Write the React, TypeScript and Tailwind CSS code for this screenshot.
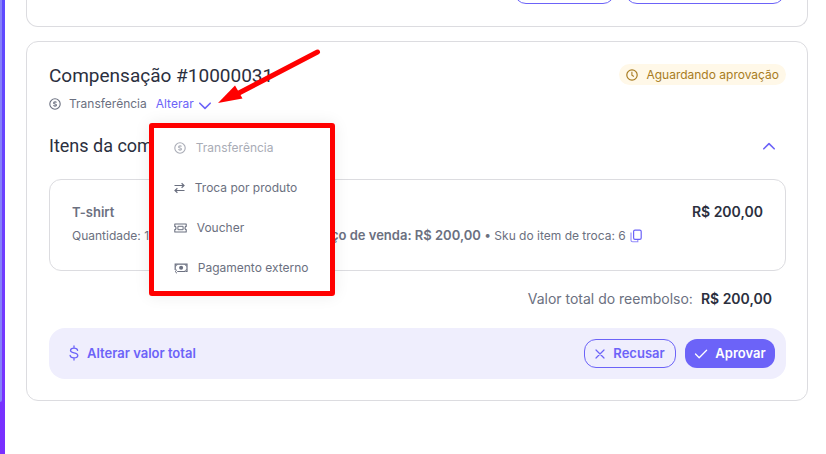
import React, { ReactNode } from 'react';

interface IconProps {
  className?: string;
}

function CoinIcon({ className }: IconProps) {
  return (
    <svg className={className} viewBox="0 0 12 12" fill="none" stroke="currentColor" aria-hidden="true">
      <circle cx="6" cy="6" r="5.2" strokeWidth="1.1" />
      <path d="M7.5 4.5C7.3 4.1 6.8 3.9 6 3.9c-.9 0-1.4.4-1.4 1 0 1.4 2.9.7 2.9 2.2 0 .7-.6 1-1.5 1-.8 0-1.3-.3-1.5-.8" strokeWidth="1.1" />
    </svg>
  );
}

function SwapIcon({ className }: IconProps) {
  return (
    <svg className={className} viewBox="0 0 11 12" fill="none" stroke="currentColor" aria-hidden="true">
      <path d="M.5 3.5H10M7.6 1.2 10 3.5 7.6 5.8M10.5 8.5H1M3.4 6.2 1 8.5l2.4 2.3" strokeWidth="1.2" />
    </svg>
  );
}

function VoucherIcon({ className }: IconProps) {
  return (
    <svg className={className} viewBox="0 0 13 10" fill="none" stroke="currentColor" aria-hidden="true">
      <path d="M.8 1h11.4v2.4c-.9 0-1.200.7-1.200 1.600s.3 1.600 1.200 1.600V9H.8V6.600C1.700 6.600 2 5.900 2 5s-.3-1.600-1.200-1.600z" strokeWidth="1.1" strokeLinejoin="round" />
      <path d="M3.9 3.300h5.200v3.400H3.900z" strokeWidth="1" />
    </svg>
  );
}

function CashIcon({ className }: IconProps) {
  return (
    <svg className={className} viewBox="0 0 14 12" fill="none" stroke="currentColor" aria-hidden="true">
      <path d="M3.8 2.1H13v7.4h-1.6M11 9.5H3.2M1.2 8V2.1h2.6" strokeWidth="1.2" />
      <path d="M11 2.1c0 1.2.8 1.9 2 1.9M13 7.6c-1.2 0-2 .8-2 1.9M1.2 4.2c1 0 1.900-.8 1.900-1.900" strokeWidth="0.9" />
      <circle cx="7.1" cy="5.8" r="2" fill="currentColor" stroke="none" />
      <path d="M3 7.7 1.1 9.5 3 11.3" strokeWidth="1" />
    </svg>
  );
}

function ChevronIcon({ className }: IconProps) {
  return (
    <svg className={className} viewBox="0 0 14 8" fill="none" stroke="currentColor" strokeLinecap="round" strokeLinejoin="round" aria-hidden="true">
      <path d="M1.8 1.2 7 6.4l5.2-5.2" strokeWidth="1.6" />
    </svg>
  );
}

function ClockIcon({ className }: IconProps) {
  return (
    <svg className={className} viewBox="0 0 12 12" fill="none" stroke="currentColor" aria-hidden="true">
      <circle cx="6" cy="6" r="5.2" strokeWidth="1.2" />
      <path d="M5.9 2.8v3.4l2 1.3" strokeWidth="1.1" />
    </svg>
  );
}

function CopyIcon({ className }: IconProps) {
  return (
    <svg className={className} viewBox="0 0 12 14" fill="none" stroke="currentColor" aria-hidden="true">
      <rect x="3.6" y="1.2" width="7.6" height="9.2" rx="1.4" strokeWidth="1.2" />
      <path d="M1 3.6v7.6a1.6 1.6 0 0 0 1.6 1.6h5.2v-2" strokeWidth="1.1" opacity="0.75" />
    </svg>
  );
}

function DollarIcon({ className }: IconProps) {
  return (
    <svg className={className} viewBox="0 0 10 16" fill="none" stroke="currentColor" strokeLinecap="round" aria-hidden="true">
      <path d="M5 1v2M5 13v2M8.6 5.4C8.4 3.9 7 3.2 5 3.2c-2.2 0-3.5.9-3.5 2.3 0 3.4 7.3 1.4 7.3 5 0 1.5-1.5 2.4-3.8 2.4-2.2 0-3.7-.9-3.9-2.5" strokeWidth="1.3" />
    </svg>
  );
}

function CloseIcon({ className }: IconProps) {
  return (
    <svg className={className} viewBox="0 0 10 10" fill="none" stroke="currentColor" strokeLinecap="round" aria-hidden="true">
      <path d="m1 1 8 8M9 1 1 9" strokeWidth="1.2" />
    </svg>
  );
}

function CheckIcon({ className }: IconProps) {
  return (
    <svg className={className} viewBox="0 0 14 10" fill="none" stroke="currentColor" strokeLinecap="round" strokeLinejoin="round" aria-hidden="true">
      <path d="M1.5 5 5.2 8.7 12.6 1.3" strokeWidth="1.3" />
    </svg>
  );
}

interface MenuItemProps {
  icon: ReactNode;
  label: string;
  disabled?: boolean;
}

function MenuItem({ icon, label, disabled }: MenuItemProps) {
  return (
    <li>
      <button
        type="button"
        role="menuitem"
        disabled={disabled}
        className="flex h-10 w-full items-center gap-2.5 pl-5 text-left text-xs disabled:text-[#a9acb6]"
      >
        {icon}
        {label}
      </button>
    </li>
  );
}

function MethodMenu() {
  return (
    <div className="absolute -left-[7px] top-[9px] z-10 w-[186px] rounded-[3px] border-[5px] border-[#ff0000] shadow-[0_0_16px_rgba(0,0,0,0.08)]">
      <ul role="menu" className="bg-white pb-[3px]">
        <MenuItem icon={<CoinIcon className="h-3 w-3" />} label="Transferência" disabled />
        <MenuItem icon={<SwapIcon className="h-3 w-[11px]" />} label="Troca por produto" />
        <MenuItem icon={<VoucherIcon className="h-2.5 w-[13px]" />} label="Voucher" />
        <MenuItem icon={<CashIcon className="h-3 w-3.5" />} label="Pagamento externo" />
      </ul>
    </div>
  );
}

function PointerArrow() {
  return (
    <svg className="pointer-events-none absolute left-[61px] -top-[66px] z-20 h-[56px] w-[104px]" viewBox="0 0 104 56" aria-hidden="true">
      <path d="M100.5 4 20 46" stroke="#ff0000" strokeWidth="5" strokeLinecap="round" />
      <path d="M1 55 18 37.5 25.5 50.5z" fill="#ff0000" />
    </svg>
  );
}

export default function App() {
  return (
    <div className="flex min-h-screen bg-white font-['Inter','Liberation_Sans',sans-serif] text-xs text-[#6b7080]">
      <aside className="flex w-[5px] shrink-0 bg-gradient-to-b from-[#5d4bff] to-[#7a2eff]">
        <div className="mb-[52px] w-0.5 rounded-br-sm bg-[#8580fa]" />
      </aside>

      <main className="flex min-w-0 grow flex-col gap-3.5 pl-[21px] pr-[18px]">
        <section className="flex justify-end gap-2.5 rounded-b-xl border border-t-0 border-[#dcdce0] px-[22px] pb-[22px]">
          <div className="h-1 w-[101px] overflow-hidden">
            <div className="-mt-6 h-7 rounded-xl border border-[#6c63f8]" />
          </div>
          <div className="h-1 w-[160px] overflow-hidden">
            <div className="-mt-6 h-7 rounded-xl border border-[#6c63f8]" />
          </div>
        </section>

        <section className="rounded-xl border border-[#dcdce0] pb-[21px] pl-[22px] pr-[21px] pt-[22px]">
          <header className="flex items-start justify-between">
            <div>
              <h1 className="font-['Roboto',sans-serif] text-[19px] leading-6 text-[#2b2f3e]">Compensação #10000031</h1>
              <div className="mt-1 flex h-6 items-center">
                <CoinIcon className="h-3 w-3" />
                <span className="ml-2">Transferência</span>
                <div className="relative ml-[9px]">
                  <button type="button" aria-haspopup="menu" aria-expanded="true" className="flex h-5 items-center gap-1 text-[#6c63f8]">
                    Alterar
                    <ChevronIcon className="mt-1 h-2 w-3.5" />
                  </button>
                  <div className="absolute left-0 top-full">
                    <MethodMenu />
                    <PointerArrow />
                  </div>
                </div>
              </div>
            </div>
            <span className="flex h-[21px] items-center gap-2 rounded-full bg-[#fff8e8] px-[7px] text-[#a87c22]">
              <ClockIcon className="h-3 w-3" />
              Aguardando aprovação
            </span>
          </header>

          <div className="mt-[18px] flex h-6 items-center justify-between pr-2.5">
            <h2 className="font-['Roboto',sans-serif] text-lg leading-6 text-[#2b2f3e]">Itens da compensação</h2>
            <button type="button" aria-label="Recolher itens" className="text-[#6c63f8]">
              <ChevronIcon className="h-2 w-3.5 rotate-180" />
            </button>
          </div>

          <article className="mt-[21px] rounded-xl border border-[#dcdce0] px-[22px] pb-[22px] pt-5">
            <div className="flex items-center justify-between">
              <h3 className="text-[13px] leading-6 font-semibold">T-shirt</h3>
              <strong className="text-sm leading-6 font-semibold text-[#2b2f3e]">R$ 200,00</strong>
            </div>
            <div className="flex h-6 items-center whitespace-pre">
              <span className="w-[238px]">Quantidade: 1 •</span>
              <strong className="text-[13px] font-semibold">Preço de venda: R$ 200,00</strong>
              <span> • Sku do item de troca: 6</span>
              <button type="button" aria-label="Copiar sku" className="ml-1 text-[#6c63f8]">
                <CopyIcon className="h-3.5 w-3" />
              </button>
            </div>
          </article>

          <p className="mt-4 flex justify-end gap-2 pr-3.5 text-sm leading-6">
            Valor total do reembolso:
            <strong className="font-semibold text-[#2b2f3e]">R$ 200,00</strong>
          </p>

          <footer className="mt-[17px] flex items-center rounded-2xl bg-[#efeefd] py-[11px] pl-5 pr-[11px] text-[13px] font-semibold text-[#6c63f8]">
            <button type="button" className="flex items-center gap-2">
              <DollarIcon className="h-4 w-2.5" />
              Alterar valor total
            </button>
            <button type="button" className="ml-auto flex h-[29px] w-[92px] items-center justify-center gap-2 rounded-xl border border-[#6c63f8]">
              <CloseIcon className="h-2.5 w-2.5" />
              Recusar
            </button>
            <button type="button" className="ml-[9px] flex h-[29px] w-[90px] items-center justify-center gap-[7px] rounded-xl bg-[#6c63f8] text-white">
              <CheckIcon className="h-2.5 w-3.5" />
              Aprovar
            </button>
          </footer>
        </section>
      </main>
    </div>
  );
}
